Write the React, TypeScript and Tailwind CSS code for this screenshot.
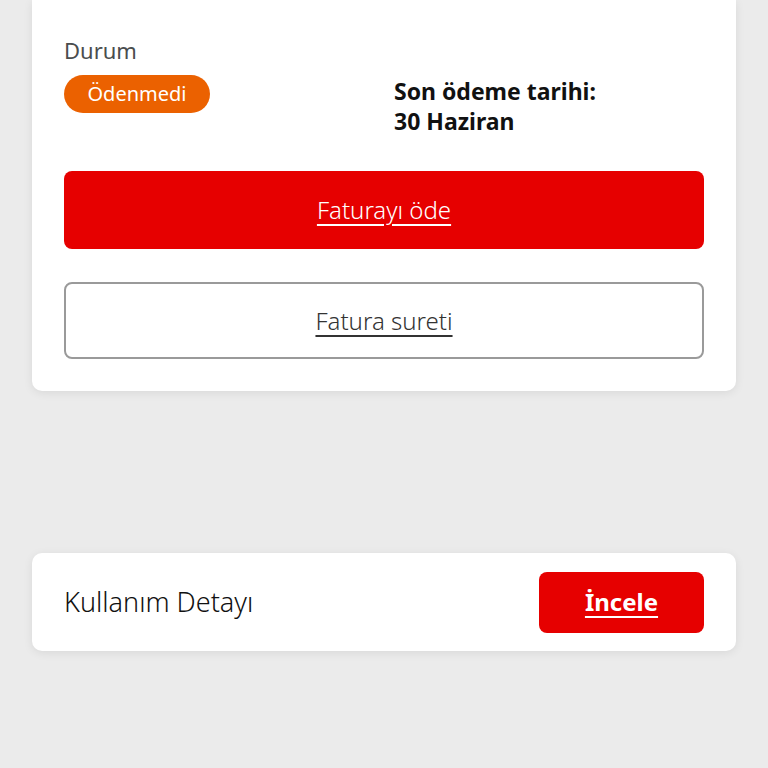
export default function App() {
  return (
    <div className="min-h-[768px] w-full bg-[#ebebeb] font-['Noto_Sans',sans-serif]">
      <div className="mx-8 rounded-b-[10px] bg-white px-8 pb-8 pt-[34px] shadow-[0_2px_10px_rgba(0,0,0,0.08)]">
        <div className="grid grid-cols-2 gap-5">
          <div>
            <p className="text-[22px] leading-[32px] text-[#4a4d4e]">Durum</p>
            <span className="mt-[9px] inline-flex h-[38px] w-[146px] items-center justify-center rounded-full bg-[#eb6100] text-[20px] text-white">
              Ödenmedi
            </span>
          </div>
          <div className="pt-[42px] text-[23px] font-bold leading-[30px] text-[#111]">
            <p>Son ödeme tarihi:</p>
            <p>30 Haziran</p>
          </div>
        </div>

        <button className="mt-[35px] flex h-[78px] w-full items-center justify-center rounded-[8px] bg-[#e60000] text-[24px] font-light text-white underline underline-offset-[5px]">
          Faturayı öde
        </button>
        <button className="mt-[33px] flex h-[77px] w-full items-center justify-center rounded-[8px] border-2 border-[#9a9a9a] bg-white text-[24px] font-light text-[#333] underline underline-offset-[5px]">
          Fatura sureti
        </button>
      </div>

      <div className="mx-8 mt-[162px] flex h-[98px] items-center justify-between rounded-[10px] bg-white pl-8 pr-8 shadow-[0_2px_10px_rgba(0,0,0,0.08)]">
        <span className="text-[27px] font-light text-[#111]">Kullanım Detayı</span>
        <button className="flex h-[61px] w-[165px] items-center justify-center rounded-[8px] bg-[#e60000] text-[24px] font-bold text-white underline underline-offset-[5px]">
          İncele
        </button>
      </div>
    </div>
  );
}
